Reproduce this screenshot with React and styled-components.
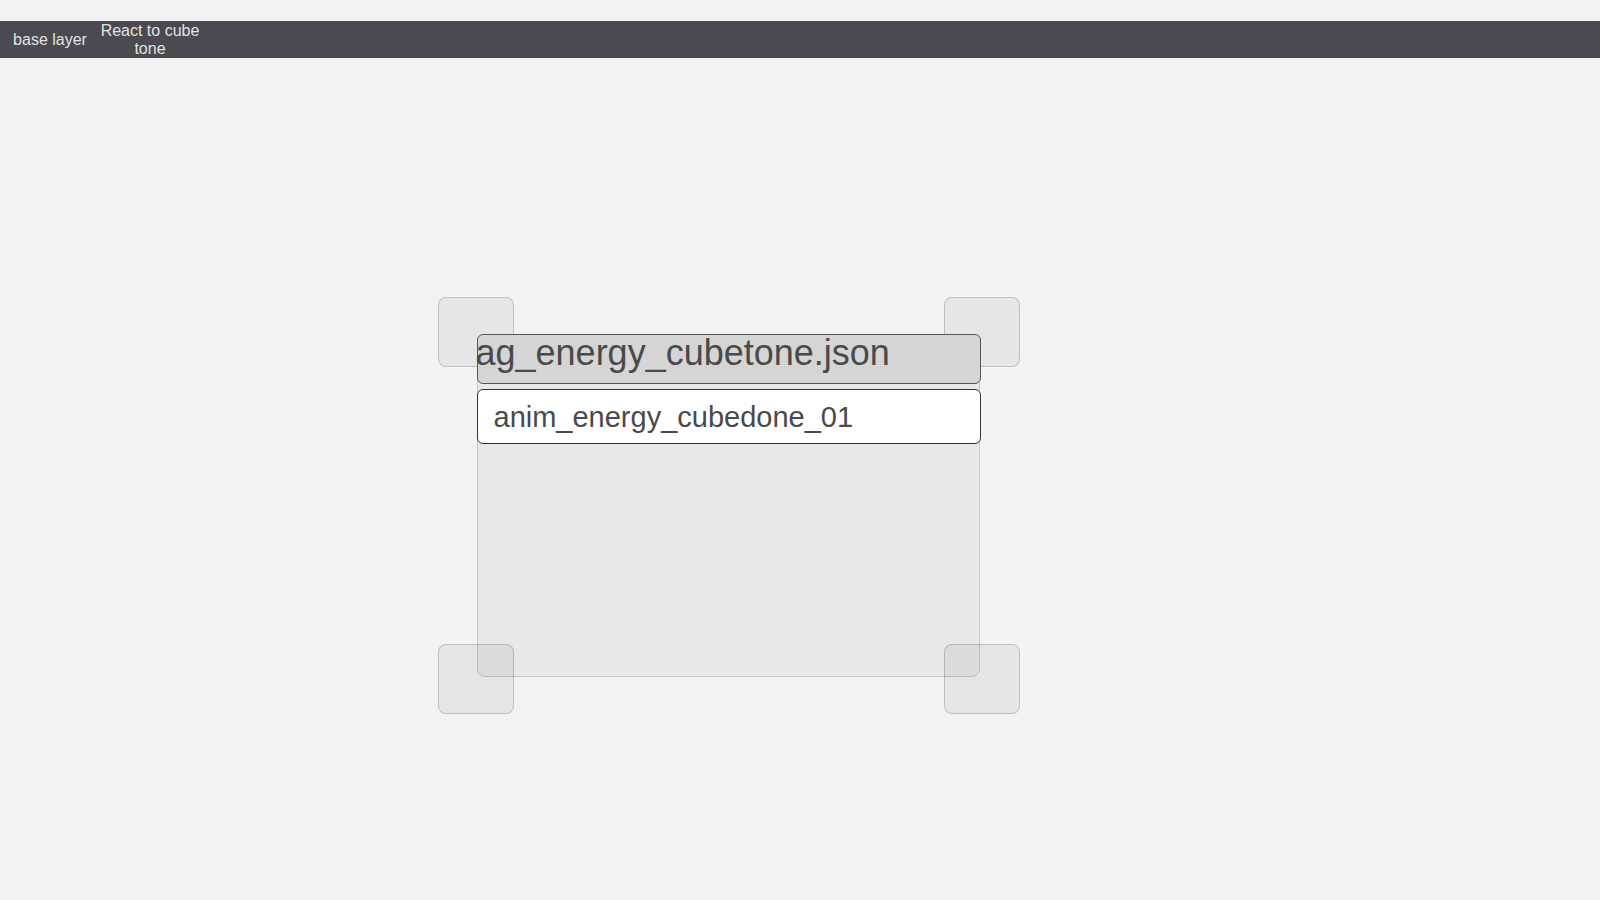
import styled, { createGlobalStyle } from "styled-components";

const GlobalStyle = createGlobalStyle`
  html, body {
    margin: 0;
    padding: 0;
    background: #f3f3f3;
    font-family: "Liberation Sans", Arial, sans-serif;
  }
`;

const Page = styled("div")`
  min-height: 900px;
  padding-top: 21px;
  box-sizing: border-box;
`;

const TopBar = styled("div")`
  display: flex;
  align-items: center;
  height: 37px;
  background-color: #4b4a50;
`;

const Tab = styled("div")`
  width: 100px;
  font-size: 16px;
  line-height: 18px;
  text-align: center;
  color: #e2e2e2;
  cursor: pointer;
`;

const Canvas = styled("div")`
  padding: 276px 0 0 477px;
`;

const Frame = styled("div")`
  position: relative;
  width: 503px;
  height: 343px;
`;

const Panel = styled("div")`
  display: flex;
  flex-direction: column;
  gap: 5px;
  width: 100%;
  height: 100%;
  box-sizing: border-box;
  border: 1.5px solid #c6c6c6;
  border-radius: 8px;
  background-color: #e8e8e8;
`;

const Header = styled("div")`
  position: relative;
  z-index: 2;
  height: 50px;
  margin: -1.5px -1.5px 0;
  box-sizing: border-box;
  border: 1.5px solid #575757;
  border-radius: 6px;
  background-color: #d5d5d5;
  font-size: 36px;
  line-height: 35px;
  text-indent: -2px;
  white-space: nowrap;
  color: #4a4a4a;
`;

const NameField = styled("div")`
  position: relative;
  z-index: 2;
  display: flex;
  align-items: center;
  height: 55px;
  margin: 0 -1.5px;
  padding: 3px 0 0 16px;
  box-sizing: border-box;
  border: 1.5px solid #343434;
  border-radius: 6px;
  background-color: #ffffff;
  font-size: 29px;
  color: #4a4a4a;
`;

const Handle = styled("div")`
  position: absolute;
  z-index: 1;
  width: 76px;
  height: 70px;
  box-sizing: border-box;
  border: 1.5px solid rgba(0, 0, 0, 0.17);
  border-radius: 8px;
  background-color: rgba(0, 0, 0, 0.05);
  ${({ $v }) => ($v === "top" ? "top: -37px;" : "bottom: -37px;")}
  ${({ $h }) => ($h === "left" ? "left: -39px;" : "right: -40px;")}
`;

const corners = [
  ["top", "left"],
  ["top", "right"],
  ["bottom", "left"],
  ["bottom", "right"],
];

const App = () => {
  return (
    <Page>
      <GlobalStyle />
      <TopBar>
        <Tab>base layer</Tab>
        <Tab>React to cube tone</Tab>
      </TopBar>
      <Canvas>
        <Frame>
          <Panel>
            <Header>ag_energy_cubetone.json</Header>
            <NameField>anim_energy_cubedone_01</NameField>
          </Panel>
          {corners.map(([v, h]) => (
            <Handle key={v + h} $v={v} $h={h} />
          ))}
        </Frame>
      </Canvas>
    </Page>
  );
};

export default App;
